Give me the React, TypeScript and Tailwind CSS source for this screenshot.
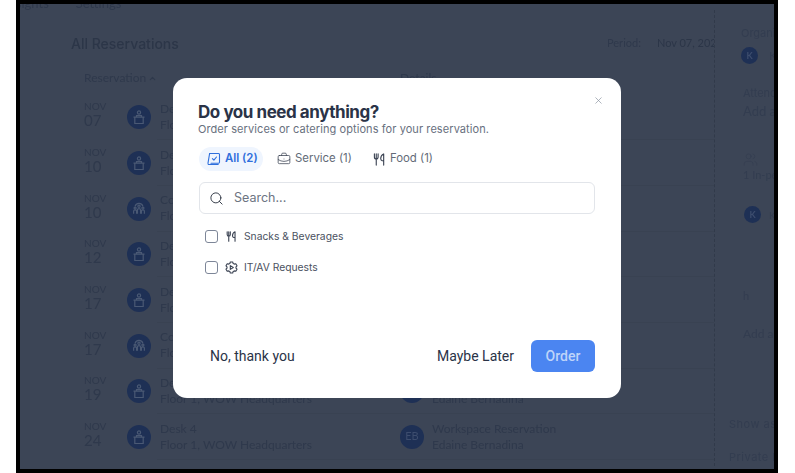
import { Search, BriefcaseBusiness, Utensils, ChevronUp, X, Users } from "lucide-react";

const rows = [
  { d: "07", t: "Desk 4", k: "desk" },
  { d: "10", t: "Desk 4", k: "desk" },
  { d: "10", t: "Conference Room", k: "room" },
  { d: "12", t: "Desk 4", k: "desk" },
  { d: "17", t: "Desk 4", k: "desk" },
  { d: "17", t: "Conference Room", k: "room" },
  { d: "19", t: "Desk 4", k: "desk" },
  { d: "24", t: "Desk 4", k: "desk" },
];

function DeskIcon() {
  return (
    <svg width="14" height="15" viewBox="0 0 14 15" fill="none" stroke="#4a5974" strokeWidth="1.2">
      <circle cx="7" cy="2.5" r="1.6" />
      <path d="M4.5 7V5.6h5V7" />
      <path d="M1.5 7.2h11M2.8 7.2v6.3h8.4V7.2" />
    </svg>
  );
}

function RoomIcon() {
  return (
    <svg width="14" height="13" viewBox="0 0 16 15" fill="none" stroke="#4a5974" strokeWidth="1.4">
      <path d="M3.5 5C4 2.500 6 1.500 8 1.500s4 1 4.500 3.500" />
      <circle cx="8" cy="5" r="1.300" />
      <circle cx="3.500" cy="7" r="1.200" />
      <circle cx="12.500" cy="7" r="1.200" />
      <path d="M1.800 13.500v-3.200c0-.8.7-1.300 1.700-1.300s1.700.5 1.700 1.300v3.200M6.200 13.500V9c0-.8.8-1.400 1.800-1.400s1.800.6 1.800 1.400v4.500M10.800 13.500v-3.200c0-.8.7-1.300 1.700-1.300s1.700.5 1.700 1.300v3.200" />
    </svg>
  );
}

function AllIcon() {
  return (
    <svg width="14" height="14" viewBox="0 0 14 14" fill="none" stroke="#2f6fdc" strokeWidth="1.1" strokeLinejoin="round" strokeLinecap="round">
      <path d="M2.600 1.500h9a.9.9 0 0 1 .9 1v7.800a.9.9 0 0 1-.9.9H4" />
      <path d="M2.600 1.500 1 11.200a1 1 0 0 0 1 1.300h9.200" />
      <path d="m5.400 6.600 1.500 1.600 2.600-3.200" />
    </svg>
  );
}

function ForkKnife({ size, width }: { size: number; width: number }) {
  return (
    <svg width={size} height={size} viewBox="0 0 14 14" fill="none" stroke="#3a4252" strokeWidth={width} strokeLinecap="round" strokeLinejoin="round">
      <path d="M1.500 1v3.400c0 1.300.9 2.200 2 2.200s2-.9 2-2.200V1M3.500 1v12" />
      <path d="M11.500 13V1C9.500 1.800 8.300 3.700 8.300 6c0 1.300.6 2.100 1.500 2.300h1.700" />
    </svg>
  );
}

function GearPlay() {
  return (
    <svg width="13" height="13" viewBox="0 0 13 13" fill="none" stroke="#3a4252" strokeWidth="1.1" strokeLinejoin="round">
      <path d="M5.300 1h2.400l.4 1.400 1.300.7 1.400-.4 1.200 2.100-1 1v1.400l1 1-1.200 2.100-1.400-.4-1.300.7L7.700 12H5.300l-.4-1.400-1.300-.7-1.400.4L1 8.200l1-1V5.800l-1-1 1.200-2.100 1.400.4 1.300-.7Z" />
      <path d="M5.300 4.600v3.800l3-1.900Z" />
    </svg>
  );
}

function Background() {
  return (
    <div className="h-full w-full overflow-hidden bg-[#3c4556] blur-[0.5px] [font-family:Lato,sans-serif] text-[#2f394c]">
      <div className="-ml-[15px] -mt-[6px] flex h-[12px] items-center gap-[33px] whitespace-nowrap text-[13px]">
        <span>Insights</span>
        <span className="-ml-[6px]">Settings</span>
      </div>
      <div className="flex">
        <div className="w-[695px] shrink-0 overflow-hidden border-r border-dashed border-[#313a4a] pl-[51px]">
          <div className="mt-[24px] flex h-[18px] items-center justify-between">
            <span className="[font-family:Inter,sans-serif] text-[14px] font-medium text-[#2c3648]">All Reservations</span>
            <span className="flex w-[107px] gap-[16px] whitespace-nowrap text-[11px]">
              <span>Period:</span>
              <span className="text-[#2c3648]">Nov 07, 2025</span>
            </span>
          </div>
          <div className="mt-[16px] flex h-[20px] items-center pl-[13px] text-[12px]">
            <span className="flex w-[316px] items-center gap-0.5">
              Reservation <ChevronUp size={9} strokeWidth={3} />
            </span>
            <span>Details</span>
          </div>
          <div className="mt-[6.5px]">
            {rows.map((r, i) => (
              <div key={i} className="flex h-[45.7px] items-center pl-[13px]">
                <div className="flex w-[43px] flex-col pb-[5px] leading-none text-[#2f394c]">
                  <span className="text-[10px]">NOV</span>
                  <span className="mt-[2px] text-[15px]">{r.d}</span>
                </div>
                <div className="flex h-[24px] w-[24px] shrink-0 items-center justify-center rounded-full bg-[#1e3055]">
                  {r.k === "desk" ? <DeskIcon /> : <RoomIcon />}
                </div>
                <div className="ml-[6px] flex flex-1 items-center self-stretch border-b border-[#394252] pl-[3px]">
                  <div className="flex w-[240px] flex-col text-[12px] leading-[16px]">
                    <span>{r.t}</span>
                    <span>Floor 1, WOW Headquarters</span>
                  </div>
                  <div className="flex h-[24px] w-[24px] items-center justify-center rounded-full bg-[#1e3055] text-[11px] text-[#3d4d6e]">EB</div>
                  <div className="ml-[8px] flex flex-col text-[12px] leading-[16px]">
                    <span>Workspace Reservation</span>
                    <span>Edaine Bernadina</span>
                  </div>
                </div>
              </div>
            ))}
          </div>
        </div>
        <div className="min-w-0 flex-1 overflow-hidden whitespace-nowrap pl-[14px] text-[11px] text-[#333d50]">
          <div className="mt-[15px] pl-[12px] [font-family:Inter,sans-serif]">Organizer</div>
          <div className="mt-[5px] flex items-center gap-[11px] pl-[12px]">
            <span className="flex h-[17px] w-[17px] shrink-0 items-center justify-center rounded-full bg-[#1e3055] text-[9px] font-bold text-[#3d4d6e]">K</span>
            <span className="text-[12px]">Kim</span>
          </div>
          <div className="mt-[20px] pl-[14px] [font-family:Inter,sans-serif]">Attendees</div>
          <div className="mt-[1px] pl-[14px] text-[13px]">Add attendees</div>
          <div className="mt-[30px] pl-[14px]"><Users size={15} strokeWidth={1} /></div>
          <div className="mt-0 pl-[14px]">1 In-person</div>
          <div className="mt-[23px] flex items-center gap-[8px] pl-[15px]">
            <span className="flex h-[17px] w-[17px] shrink-0 items-center justify-center rounded-full bg-[#1e3055] text-[9px] font-bold text-[#3d4d6e]">K</span>
            <span className="text-[10px] leading-[14px]">Kim</span>
          </div>
          <div className="mt-[65px] pl-[14px]">h</div>
          <div className="mt-[20px] pl-[14px] text-[12px]">Add a note</div>
          <div className="mt-[73px] [font-family:Inter,sans-serif] text-[11px] tracking-[0.5px]">Show as</div>
          <div className="mt-[17px] [font-family:Inter,sans-serif] text-[11px] tracking-[0.5px]">Private Reservation</div>
        </div>
      </div>
    </div>
  );
}

function Tab({ active, icon, label }: { active?: boolean; icon: React.ReactNode; label: string }) {
  return (
    <div className={`flex h-[24px] items-center gap-[4px] whitespace-nowrap rounded-full px-[6px] text-[11.4px] ${active ? "w-[64px] bg-[#eff5fe] pl-[8px] pr-0 font-semibold text-[#2f6fdc]" : "text-[#636b78]"}`}>
      {icon}
      <span>{label}</span>
    </div>
  );
}

export default function App() {
  return (
    <div className="h-[473px] w-[795px] overflow-hidden bg-white pl-[16px] pr-[17px] [font-family:Inter,sans-serif]">
      <div className="relative h-[473px] w-full overflow-hidden border-4 border-black">
        <Background />
        <div className="absolute inset-0 flex justify-center pt-[74px]">
          <div className="relative flex h-[320px] w-[448px] flex-col rounded-[14px] bg-white px-[26px] pt-[24px]">
            <button className="absolute right-[17px] top-[17px] text-[#8b93a1]">
              <X size={11} strokeWidth={1.5} />
            </button>
            <h2 className="-ml-[1px] text-[17px] font-bold leading-[20px] tracking-[-0.45px] text-[#2a3347]">Do you need anything?</h2>
            <p className="-ml-[1px] mt-[-1px] text-[11px] leading-[16px] tracking-[0.08px] text-[#68707e]">Order services or catering options for your reservation.</p>
            <div className="mt-[10px] flex items-center gap-[8px]">
              <Tab active icon={<AllIcon />} label="All (2)" />
              <Tab icon={<BriefcaseBusiness size={14} strokeWidth={1.3} color="#3a4252" />} label="Service (1)" />
              <div className="ml-[1px]">
                <Tab icon={<ForkKnife size={13} width={1.2} />} label="Food (1)" />
              </div>
            </div>
            <div className="mt-[11px] flex h-[32px] items-center gap-[10px] rounded-[6px] border border-[#e2e5ea] px-[9px]">
              <Search size={15} strokeWidth={1.5} color="#2d3441" />
              <span className="text-[12.5px] text-[#6d7482]">Search...</span>
            </div>
            <div className="mt-[16px] flex flex-col gap-[18px] pl-[6px] text-[10.3px] text-[#4a5160]">
              <div className="flex h-[13px] items-center">
                <span className="h-[13px] w-[13px] rounded-[3px] border-[1.5px] border-[#7d8698]" />
                <span className="ml-[8px] flex w-[18px]"><ForkKnife size={11} width={1.4} /></span>
                <span>Snacks &amp; Beverages</span>
              </div>
              <div className="flex h-[13px] items-center">
                <span className="h-[13px] w-[13px] rounded-[3px] border-[1.5px] border-[#7d8698]" />
                <span className="ml-[7px] flex w-[19px]"><GearPlay /></span>
                <span>IT/AV Requests</span>
              </div>
            </div>
            <div className="mb-[26px] mt-auto flex items-center justify-between [font-family:Roboto,sans-serif] text-[14px] text-[#2a3347]">
              <button className="pl-[11px]">No, thank you</button>
              <div className="flex items-center gap-[17px]">
                <button>Maybe Later</button>
                <button className="h-[32px] w-[64px] rounded-[6px] bg-[#4b85f1] font-medium text-[#bfd4f9]">Order</button>
              </div>
            </div>
          </div>
        </div>
      </div>
    </div>
  );
}
